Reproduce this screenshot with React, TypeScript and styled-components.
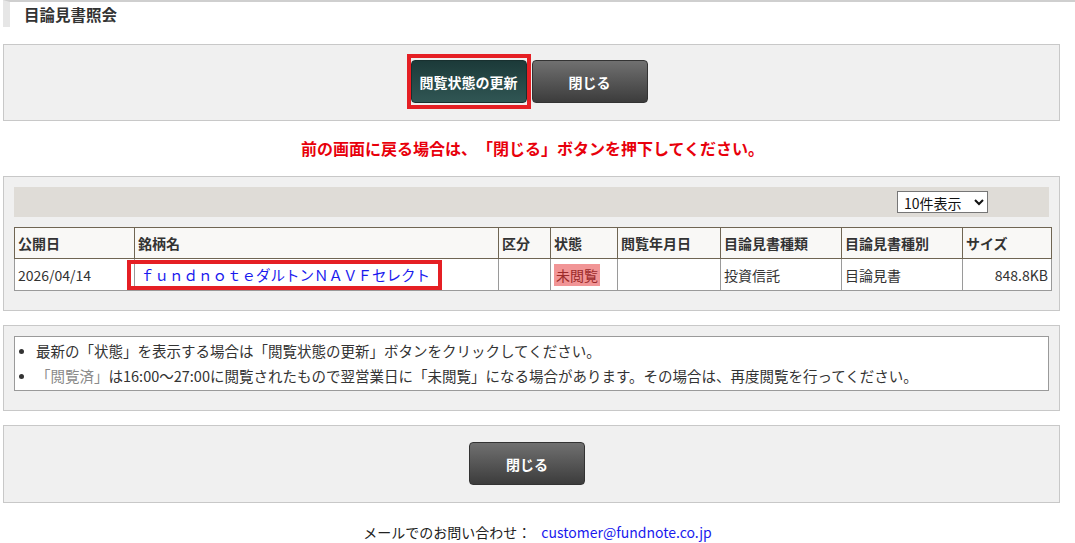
import * as React from 'react';
import styled, { createGlobalStyle } from 'styled-components';

const GlobalStyle = createGlobalStyle`
    html, body {
        margin: 0;
        padding: 0;
        background: #ffffff;
    }
    body {
        font-family: "Noto Sans CJK JP", "Noto Sans", "Liberation Sans", sans-serif;
        color: #333333;
        text-spacing-trim: space-all;
    }
`;

type Doc = {
    date: string;
    name: string;
    kind: string;
    status: string;
    viewed: string;
    docType: string;
    docClass: string;
    size: string;
};

const docs: Doc[] = [
    {
        date: '2026/04/14',
        name: 'ｆｕｎｄｎｏｔｅダルトンＮＡＶＦセレクト',
        kind: '',
        status: '未閲覧',
        viewed: '',
        docType: '投資信託',
        docClass: '目論見書',
        size: '848.8KB',
    },
];

const columns = [
    { label: '公開日', width: 120 },
    { label: '銘柄名', width: 364 },
    { label: '区分', width: 52 },
    { label: '状態', width: 67 },
    { label: '閲覧年月日', width: 103 },
    { label: '目論見書種類', width: 121 },
    { label: '目論見書種別', width: 121 },
    { label: 'サイズ', width: 89 },
];

const Page = styled.div`
    width: 1075px;
`;

const Title = styled.h1`
    margin: 0 0 17px 3px;
    height: 27px;
    border-top: 2px solid #cfcfcf;
    border-left: 7px solid #e6e6e6;
    padding-left: 14px;
    font-size: 15.5px;
    font-weight: bold;
    line-height: 24px;
    color: #333333;
    box-sizing: border-box;
`;

const Panel = styled.section<{ $pad?: string }>`
    margin-left: 3px;
    width: 1057px;
    box-sizing: border-box;
    background: #f0f0f0;
    border: 1px solid #c8c8c8;
    padding: ${props => props.$pad ?? '10px'};
`;

const ButtonRow = styled.div`
    display: flex;
    justify-content: center;
    align-items: center;
    gap: 1px;
    padding-right: 9px;
`;

const Highlight = styled.div`
    border: 4px solid #e51f24;
    padding: 2px 0;
    display: flex;
`;

const Button = styled.button<{ $variant?: 'teal' | 'gray' }>`
    width: 116px;
    height: 43px;
    border: 1px solid ${props => (props.$variant === 'teal' ? '#18302f' : '#333333')};
    border-radius: 4px;
    background: ${props =>
        props.$variant === 'teal'
            ? 'linear-gradient(#1c3a39, #305654)'
            : 'linear-gradient(#707070, #3c3c3c)'};
    color: #ffffff;
    font-family: inherit;
    font-size: 14px;
    font-weight: bold;
    cursor: pointer;
    padding: 0;
`;

const Warning = styled.p`
    margin: 0;
    height: 55px;
    display: flex;
    align-items: center;
    justify-content: center;
    padding: 0 10px 2px 0;
    box-sizing: border-box;
    color: #e8000b;
    font-size: 16px;
    font-weight: bold;
`;

const Toolbar = styled.div`
    height: 30px;
    background: #dfdcd7;
    display: flex;
    align-items: center;
    justify-content: flex-end;
    padding-right: 61px;
    margin-bottom: 10px;
`;

const Select = styled.select`
    width: 91px;
    height: 22px;
    font-family: inherit;
    font-size: 14px;
    color: #111111;
    border: 1px solid #767676;
    background: #ffffff;
    padding: 0 2px;
`;

const Table = styled.table`
    width: 1037px;
    border-collapse: collapse;
    table-layout: fixed;
    font-size: 14px;
    margin-bottom: 9px;
`;

const Th = styled.th`
    height: 30px;
    background: #f9f8f6;
    border: 1px solid #6f6553;
    text-align: left;
    padding: 0 3px;
    font-weight: bold;
    color: #333333;
`;

const Td = styled.td<{ $align?: 'left' | 'right' }>`
    height: 31px;
    background: #ffffff;
    border: 1px solid #9a9a9a;
    text-align: ${props => props.$align ?? 'left'};
    padding: 0 3px;
    color: #333333;
`;

const NameCell = styled.span`
    display: inline-block;
    margin-left: -11px;
    border: 4px solid #e51f24;
    padding: 1px 8px 1px 9px;
    line-height: 20px;
`;

const FundLink = styled.a`
    color: #1a1aee;
    text-decoration: none;
    font-size: 14.5px;
`;

const Status = styled.span`
    background: #f19596;
    color: #9c2b2b;
    padding: 1px 2px;
`;

const NoteBox = styled.ul`
    margin: 0;
    background: #ffffff;
    border: 1px solid #9a9a9a;
    padding: 1px 0 2px 0;
    list-style: none;
`;

const NoteItem = styled.li`
    position: relative;
    padding-left: 21px;
    line-height: 25px;
    font-size: 14.5px;
    color: #333333;

    &::before {
        content: '';
        position: absolute;
        left: 4px;
        top: 11px;
        width: 5px;
        height: 5px;
        border-radius: 50%;
        background: #333333;
    }
`;

const Muted = styled.span`
    color: #8a8a8a;
`;

const Spacer = styled.div<{ $h: number }>`
    height: ${props => props.$h}px;
`;

const Footer = styled.p`
    margin: 0;
    text-align: center;
    font-size: 14px;
    line-height: 20px;
    color: #222222;
    padding-top: 19px;
`;

const MailLink = styled.a`
    color: #1a1aee;
    text-decoration: none;
    margin-left: 10px;
`;

export default function App() {
    return (
        <Page>
            <GlobalStyle />
            <Title>目論見書照会</Title>

            <Panel $pad="9px 10px 11px">
                <ButtonRow>
                    <Highlight>
                        <Button $variant="teal">閲覧状態の更新</Button>
                    </Highlight>
                    <Button $variant="gray">閉じる</Button>
                </ButtonRow>
            </Panel>

            <Warning>前の画面に戻る場合は、「閉じる」ボタンを押下してください。</Warning>

            <Panel>
                <Toolbar>
                    <Select defaultValue="10">
                        <option value="10">10件表示</option>
                        <option value="20">20件表示</option>
                        <option value="50">50件表示</option>
                    </Select>
                </Toolbar>
                <Table>
                    <colgroup>
                        {columns.map(col => (
                            <col key={col.label} style={{ width: col.width }} />
                        ))}
                    </colgroup>
                    <thead>
                        <tr>
                            {columns.map(col => (
                                <Th key={col.label}>{col.label}</Th>
                            ))}
                        </tr>
                    </thead>
                    <tbody>
                        {docs.map(doc => (
                            <tr key={doc.name}>
                                <Td>{doc.date}</Td>
                                <Td>
                                    <NameCell>
                                        <FundLink href="#">{doc.name}</FundLink>
                                    </NameCell>
                                </Td>
                                <Td>{doc.kind}</Td>
                                <Td>
                                    <Status>{doc.status}</Status>
                                </Td>
                                <Td>{doc.viewed}</Td>
                                <Td>{doc.docType}</Td>
                                <Td>{doc.docClass}</Td>
                                <Td $align="right">{doc.size}</Td>
                            </tr>
                        ))}
                    </tbody>
                </Table>
            </Panel>

            <Spacer $h={14} />

            <Panel $pad="10px 10px 19px">
                <NoteBox>
                    <NoteItem>最新の「状態」を表示する場合は「閲覧状態の更新」ボタンをクリックしてください。</NoteItem>
                    <NoteItem>
                        <Muted>「閲覧済」</Muted>は16:00～27:00に閲覧されたもので翌営業日に「未閲覧」になる場合があります。その場合は、再度閲覧を行ってください。
                    </NoteItem>
                </NoteBox>
            </Panel>

            <Spacer $h={14} />

            <Panel $pad="16px 10px 17px">
                <ButtonRow>
                    <Button $variant="gray">閉じる</Button>
                </ButtonRow>
            </Panel>

            <Footer>
                メールでのお問い合わせ：
                <MailLink href="#">customer@fundnote.co.jp</MailLink>
            </Footer>
        </Page>
    );
}
